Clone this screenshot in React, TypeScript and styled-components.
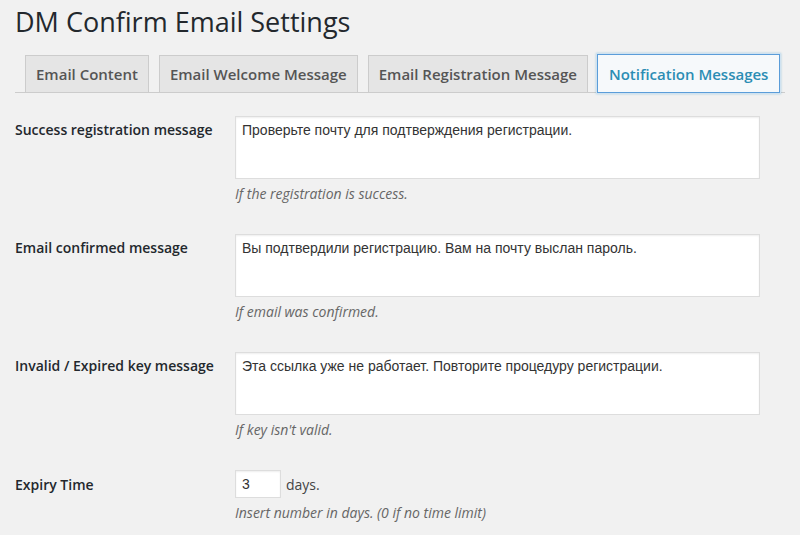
import React from "react";
import styled, { createGlobalStyle } from "styled-components";

const Global = createGlobalStyle`
  html, body { margin: 0; padding: 0; background: #f1f1f1; }
  body { font-family: "Open Sans", sans-serif; color: #444; overflow: hidden; }
`;

const Wrap = styled.div`
  padding: 0 0 0 15px;
  width: 785px;
  box-sizing: border-box;
`;

const Title = styled.h1`
  margin: 0;
  padding: 4px 0 0 0;
  font-size: 27px;
  line-height: 36px;
  font-weight: 400;
  color: #23282d;
`;

const TabBar = styled.nav`
  display: flex;
  align-items: flex-end;
  margin-top: 15px;
  border-bottom: 1px solid #ccc;
  height: 37px;
`;

const Tab = styled.a<{ $active?: boolean }>`
  display: block;
  box-sizing: border-box;
  height: ${(p) => (p.$active ? "39px" : "37px")};
  margin-left: ${(p) => (p.$active ? "9px" : "10px")};
  margin-bottom: ${(p) => (p.$active ? "-1px" : "0")};
  padding: ${(p) => (p.$active ? "7px 11px 0" : "6px 10px 0")};
  font-size: 15px;
  line-height: 24px;
  font-weight: 600;
  text-decoration: none;
  white-space: nowrap;
  color: ${(p) => (p.$active ? "#2b8db4" : "#555")};
  background: ${(p) => (p.$active ? "#f6f9fb" : "#e5e5e5")};
  border: 1px solid ${(p) => (p.$active ? "#5b9dd9" : "#ccc")};
  border-bottom: ${(p) => (p.$active ? "1px solid #5b9dd9" : "none")};
  box-shadow: ${(p) =>
    p.$active ? "0 0 0 1px #cfe2f0, 0 0 2px 1px rgba(30,140,190,0.35)" : "none"};
`;

const Table = styled.div`
  margin-top: 8px;
  display: flex;
  flex-direction: column;
`;

const Row = styled.div`
  display: grid;
  grid-template-columns: 210px 1fr;
`;

const Label = styled.div<{ $top?: number }>`
  padding: ${(p) => p.$top ?? 20}px 10px 0 0;
  font-size: 14px;
  line-height: 18px;
  font-weight: 600;
  color: #23282d;
`;

const Cell = styled.div`
  padding: 15px 10px;
`;

const Area = styled.textarea`
  display: block;
  box-sizing: border-box;
  width: 525px;
  height: 63px;
  margin: 0;
  padding: 3px 6px;
  resize: none;
  font-family: "Liberation Sans", Arial, sans-serif;
  font-size: 14px;
  line-height: 20px;
  color: #333;
  background: #fff;
  border: 1px solid #ddd;
  border-radius: 0;
  box-shadow: inset 0 1px 2px rgba(0, 0, 0, 0.07);
  outline: none;
`;

const Desc = styled.p`
  margin: 5px 0 0;
  font-size: 14px;
  line-height: 20px;
  font-style: italic;
  color: #666;
`;

const InputLine = styled.div`
  display: flex;
  align-items: center;
  gap: 5px;
  height: 28px;
  font-size: 14px;
  color: #444;
`;

const NumInput = styled.input`
  box-sizing: border-box;
  width: 46px;
  height: 28px;
  margin: 0;
  padding: 3px 6px;
  font-family: "Liberation Sans", Arial, sans-serif;
  font-size: 14px;
  color: #333;
  background: #fff;
  border: 1px solid #ddd;
  border-radius: 0;
  box-shadow: inset 0 1px 2px rgba(0, 0, 0, 0.07);
  outline: none;
`;

const rows = [
  {
    label: "Success registration message",
    value: "Проверьте почту для подтверждения регистрации.",
    desc: "If the registration is success.",
  },
  {
    label: "Email confirmed message",
    value: "Вы подтвердили регистрацию. Вам на почту выслан пароль.",
    desc: "If email was confirmed.",
  },
  {
    label: "Invalid / Expired key message",
    value: "Эта ссылка уже не работает. Повторите процедуру регистрации.",
    desc: "If key isn't valid.",
  },
];

export default function App() {
  return (
    <>
      <Global />
      <Wrap>
        <Title>DM Confirm Email Settings</Title>
        <TabBar>
          <Tab>Email Content</Tab>
          <Tab>Email Welcome Message</Tab>
          <Tab>Email Registration Message</Tab>
          <Tab $active>Notification Messages</Tab>
        </TabBar>
        <Table>
          {rows.map((r) => (
            <Row key={r.label}>
              <Label>{r.label}</Label>
              <Cell>
                <Area defaultValue={r.value} />
                <Desc>{r.desc}</Desc>
              </Cell>
            </Row>
          ))}
          <Row>
            <Label $top={21}>Expiry Time</Label>
            <Cell>
              <InputLine>
                <NumInput defaultValue="3" />
                <span>days.</span>
              </InputLine>
              <Desc>Insert number in days. (0 if no time limit)</Desc>
            </Cell>
          </Row>
        </Table>
      </Wrap>
    </>
  );
}
